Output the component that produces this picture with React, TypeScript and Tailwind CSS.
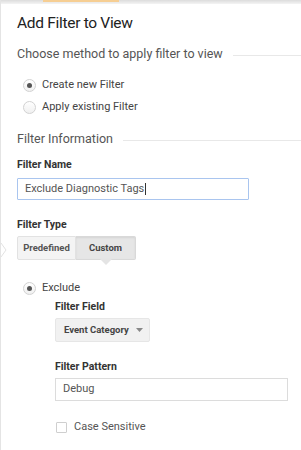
import React from 'react';

const Radio: React.FC<{ checked?: boolean }> = ({ checked }) => (
  <span className="w-[13px] h-[13px] rounded-full border border-[#d2d2d2] bg-gradient-to-b from-[#ffffff] to-[#f0f0f0] flex items-center justify-center shrink-0">
    {checked && <span className="w-[5px] h-[5px] rounded-full bg-[#555]" />}
  </span>
);

const SectionHeading: React.FC<{ children: React.ReactNode }> = ({ children }) => (
  <div className="flex items-center gap-[10px] text-[12.5px] leading-[20px] text-[#555]">
    <span className="whitespace-nowrap">{children}</span>
    <div className="flex-1 h-px bg-[#e8e8e8] mt-[2px]" />
  </div>
);

const Label: React.FC<{ children: React.ReactNode }> = ({ children }) => (
  <div className="text-[10.5px] leading-[16px] font-bold text-[#333]">{children}</div>
);

export default function App() {
  return (
    <div className="w-[301px] h-[450px] bg-white relative overflow-hidden border-l border-[#e4e4e4] font-['Roboto','Liberation_Sans',sans-serif]">
      {/* top tab strip */}
      <div className="h-[4px] bg-gradient-to-b from-[#dcdcdc] to-[#f4f4f4] flex">
        <div className="ml-[42px] w-[76px] h-[2px] bg-[#f6ce93]" />
      </div>

      {/* little pointer on the left edge */}
      <svg className="absolute left-0 top-[242px]" width="6" height="16" viewBox="0 0 6 16">
        <path d="M0 1 L5 8 L0 15" fill="#fff" stroke="#e2e2e2" strokeWidth="1" />
      </svg>

      <div className="pl-[16px]">
        <h1 className="mt-[7px] text-[15.5px] tracking-[-0.3px] leading-[24px] text-[#222]">Add Filter to View</h1>

        <div className="mt-[9px]">
          <SectionHeading>Choose method to apply filter to view</SectionHeading>
        </div>

        <div className="mt-[10px] pl-[6px] text-[11px] leading-[22px] text-[#444]">
          <div className="flex items-center gap-[6px]">
            <Radio checked />
            <span>Create new Filter</span>
          </div>
          <div className="flex items-center gap-[6px]">
            <Radio />
            <span>Apply existing Filter</span>
          </div>
        </div>

        <div className="mt-[11px]">
          <SectionHeading>Filter Information</SectionHeading>
        </div>

        <div className="mt-[8px]">
          <Label>Filter Name</Label>
        </div>
        <div className="mt-[5px] w-[232px] h-[22px] border border-[#a9c5ef] rounded-[1px] flex items-center px-[7px] text-[11px] text-[#555]">
          <span>Exclude Diagnostic Tags</span>
          <span className="w-px h-[12px] bg-[#333] ml-[1px]" />
        </div>

        <div className="mt-[17px]">
          <Label>Filter Type</Label>
        </div>
        <div className="mt-[3px] flex relative">
          <div className="w-[59px] h-[24px] flex items-center justify-center bg-[#f4f4f4] border border-[#e2e2e2] rounded-l-[2px] text-[9.5px] font-bold text-[#555]">
            Predefined
          </div>
          <div className="w-[60px] h-[24px] flex items-center justify-center bg-[#e6e6e6] border border-[#d9d9d9] border-l-0 rounded-r-[2px] shadow-[inset_0_1px_2px_rgba(0,0,0,0.08)] text-[9.5px] font-bold text-[#444] relative">
            Custom
            <svg className="absolute left-[24px] -bottom-[6px]" width="12" height="6" viewBox="0 0 12 6">
              <path d="M0 0 L6 6 L12 0 Z" fill="#e4e4e4" />
            </svg>
          </div>
        </div>

        <div className="mt-[18px] pl-[6px] flex items-center gap-[6px] text-[11px] leading-[20px] text-[#444]">
          <Radio checked />
          <span>Exclude</span>
        </div>

        <div className="pl-[38px]">
          <div className="mt-[1px]">
            <Label>Filter Field</Label>
          </div>
          <div className="mt-[3px] w-[95px] h-[24px] bg-[#f1f1f1] border border-[#e6e6e6] rounded-[2px] flex items-center pl-[8px] pr-[6px] text-[9.5px] font-bold text-[#444]">
            <span className="flex-1">Event Category</span>
            <svg width="7" height="4" viewBox="0 0 7 4">
              <path d="M0 0 L7 0 L3.5 4 Z" fill="#888" />
            </svg>
          </div>

          <div className="mt-[17px]">
            <Label>Filter Pattern</Label>
          </div>
          <div className="mt-[3px] w-[233px] h-[23px] border border-[#dcdcdc] flex items-center px-[7px] text-[11px] text-[#555]">
            Debug
          </div>

          <div className="mt-[16px] flex items-center gap-[7px] text-[11px] leading-[20px] text-[#555]">
            <span className="ml-[1px] w-[11px] h-[11px] border border-[#cfcfcf] rounded-[1px] bg-white" />
            <span>Case Sensitive</span>
          </div>
        </div>
      </div>
    </div>
  );
}
